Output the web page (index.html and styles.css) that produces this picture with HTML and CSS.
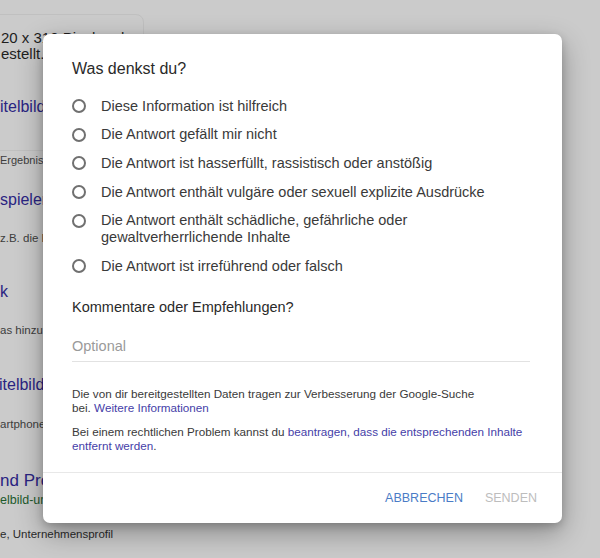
FILE: index.html
```html
<!DOCTYPE html>
<html lang="de">
<head>
<meta charset="utf-8">
<title>Feedback</title>
<link rel="stylesheet" href="styles.css">
</head>
<body>
<div class="page">
  <div class="snippet">
    <div class="bg-text big">20 x 310 Pixel und wurde mit Canva</div>
    <div class="bg-text big">estellt.</div>
    <div class="bg-link l1">itelbild erstellen</div>
  </div>
  <div class="bg-small m-ergebnis">Ergebnis</div>
  <div class="bg-link m-spielen">spielen</div>
  <div class="bg-small m-zb">z.B. die Einstellungen</div>
  <div class="bg-link m-k">k</div>
  <div class="bg-small m-hinzu">as hinzu?</div>
  <div class="bg-link m-titel">itelbild</div>
  <div class="bg-small m-phone">artphone</div>
  <div class="bg-link big-link m-pro">nd Profil</div>
  <div class="bg-url">elbild-und-profilbild</div>
  <div class="bg-small dark m-profil">e, Unternehmensprofil</div>
</div>

<div class="dialog" role="dialog">
  <div class="dialog-body">
    <div class="title">Was denkst du?</div>
    <div class="options">
      <label class="option"><span class="radio"></span><span class="opt-text">Diese Information ist hilfreich</span></label>
      <label class="option"><span class="radio"></span><span class="opt-text">Die Antwort gefällt mir nicht</span></label>
      <label class="option"><span class="radio"></span><span class="opt-text">Die Antwort ist hasserfüllt, rassistisch oder anstößig</span></label>
      <label class="option"><span class="radio"></span><span class="opt-text">Die Antwort enthält vulgäre oder sexuell explizite Ausdrücke</span></label>
      <label class="option"><span class="radio"></span><span class="opt-text">Die Antwort enthält schädliche, gefährliche oder gewaltverherrlichende Inhalte</span></label>
      <label class="option"><span class="radio"></span><span class="opt-text">Die Antwort ist irreführend oder falsch</span></label>
    </div>
    <div class="subtitle">Kommentare oder Empfehlungen?</div>
    <div class="input">Optional</div>
    <p class="note">Die von dir bereitgestellten Daten tragen zur Verbesserung der Google-Suche<br>bei. <a class="link">Weitere Informationen</a></p>
    <p class="note second">Bei einem rechtlichen Problem kannst du <a class="link">beantragen, dass die entsprechenden Inhalte<br>entfernt werden</a>.</p>
  </div>
  <div class="dialog-footer">
    <span class="btn cancel">ABBRECHEN</span>
    <span class="btn send">SENDEN</span>
  </div>
</div>
</body>
</html>
```
FILE: styles.css
```css
html, body {
  margin: 0;
  padding: 0;
}
body {
  width: 600px;
  height: 558px;
  overflow: hidden;
  background: #cbcbcb;
  font-family: "Liberation Sans", Arial, sans-serif;
  position: relative;
}

/* background page (dimmed) */
.page {
  display: flex;
  flex-direction: column;
  align-items: flex-start;
  white-space: nowrap;
}
.snippet {
  margin-top: 14px;
  margin-left: -10px;
  width: 142px;
  padding: 15px 0 33px 10px;
  border: 1px solid #c0c0c0;
  border-radius: 8px;
  overflow: hidden;
}
.bg-text {
  color: #1e1e1e;
  font-size: 15px;
  line-height: 16px;
}
.bg-link {
  color: #2a2482;
  font-size: 16px;
  line-height: 20px;
}
.big-link {
  font-size: 17px;
  line-height: 22px;
}
.bg-small {
  color: #3d3d3d;
  font-size: 11.5px;
  line-height: 16px;
}
.bg-small.dark {
  color: #2a2a2a;
}
.bg-url {
  color: #1d5a2c;
  font-size: 12.5px;
  line-height: 16px;
}
.l1 { margin-top: 35px; margin-left: -1px; }
.m-ergebnis { margin-top: 1px; font-size: 11px; }
.m-spielen { margin-top: 22px; }
.m-zb { margin-top: 20px; }
.m-k { margin-top: 36px; }
.m-hinzu { margin-top: 20px; }
.m-titel { margin-top: 37px; margin-left: -1px; }
.m-phone { margin-top: 21px; }
.m-pro { margin-top: 38px; }
.m-profil { margin-top: 18px; }

/* dialog */
.dialog {
  position: absolute;
  left: 43px;
  top: 34px;
  width: 519px;
  height: 489px;
  background: #fff;
  border-radius: 7px;
  box-shadow: 0 10px 28px rgba(0, 0, 0, 0.32), 0 3px 8px rgba(0, 0, 0, 0.18);
  display: flex;
  flex-direction: column;
  box-sizing: border-box;
}
.dialog-body {
  padding: 25px 32px 19px 29px;
  flex: 1;
}
.title {
  font-size: 16px;
  line-height: 20px;
  color: #2a2a2a;
}
.options {
  margin-top: 18.5px;
  display: flex;
  flex-direction: column;
  gap: 11.7px;
}
.option {
  display: flex;
  align-items: flex-start;
  gap: 15px;
}
.radio {
  flex: none;
  width: 14px;
  height: 14px;
  margin-top: 1.5px;
  box-sizing: border-box;
  border: 2px solid #707070;
  border-radius: 50%;
}
.opt-text {
  font-size: 14.5px;
  line-height: 17px;
  color: #3a3a3a;
}
.subtitle {
  margin-top: 22px;
  font-size: 14.5px;
  line-height: 20px;
  color: #2a2a2a;
}
.input {
  margin-top: 21px;
  font-size: 14.5px;
  line-height: 17px;
  color: #9a9a9a;
  padding-bottom: 6px;
  border-bottom: 1px solid #e2e2e2;
}
.note {
  margin: 25px 0 0 0;
  font-size: 11.7px;
  line-height: 14px;
  color: #3a3a3a;
}
.note.second {
  margin-top: 10px;
}
.link {
  color: #4540a8;
  text-decoration: none;
}
.dialog-footer {
  height: 50px;
  border-top: 1px solid #e8e8e8;
  display: flex;
  justify-content: flex-end;
  align-items: center;
  gap: 22px;
  padding-right: 25px;
}
.btn {
  font-size: 12.5px;
  line-height: 16px;
}
.cancel { color: #4a7cc6; }
.send { color: #bdbdbd; }
```
